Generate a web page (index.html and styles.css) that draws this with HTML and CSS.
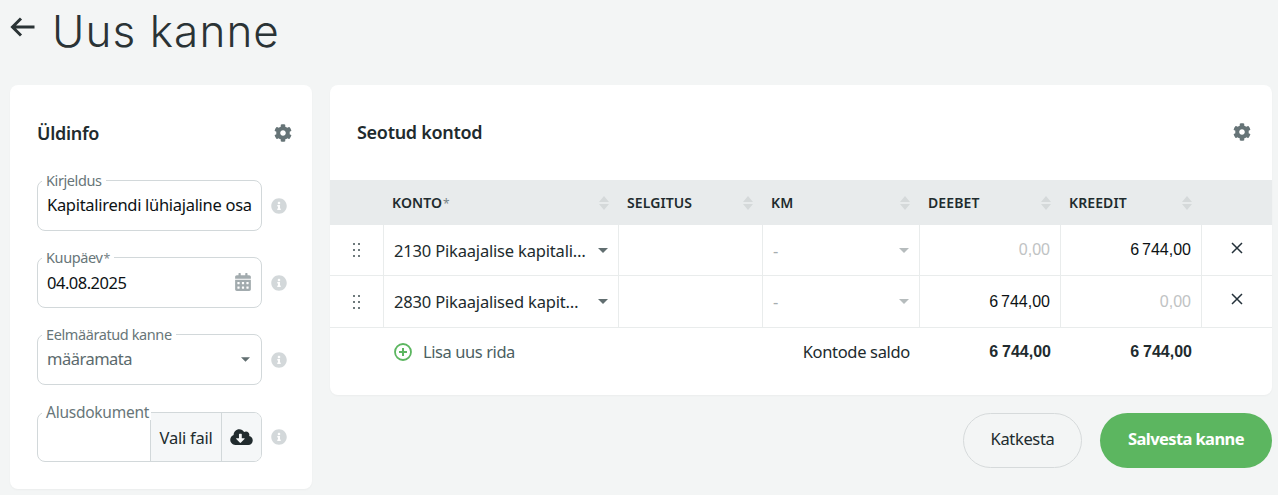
FILE: index.html
```html
<!DOCTYPE html>
<html lang="et">
<head>
<meta charset="utf-8">
<title>Uus kanne</title>
<link rel="stylesheet" href="styles.css">
</head>
<body>
<svg class="defs" width="0" height="0">
  <symbol id="cog" viewBox="0 0 512 512"><path d="M487.4 315.7l-42.6-24.6c4.3-23.2 4.3-47 0-70.2l42.6-24.6c4.9-2.8 7.1-8.6 5.5-14-11.1-35.6-30-67.8-54.7-94.6-3.8-4.1-10-5.1-14.8-2.3L380.8 110c-17.9-15.4-38.5-27.3-60.8-35.1V25.8c0-5.6-3.9-10.5-9.4-11.7-36.7-8.2-74.3-7.8-109.2 0-5.5 1.2-9.4 6.1-9.4 11.7V75c-22.2 7.9-42.8 19.8-60.8 35.1L88.7 85.5c-4.9-2.8-11-1.9-14.8 2.3-24.7 26.7-43.6 58.9-54.7 94.6-1.7 5.4.6 11.2 5.5 14L67.3 221c-4.3 23.2-4.3 47 0 70.2l-42.6 24.6c-4.9 2.8-7.1 8.6-5.5 14 11.1 35.6 30 67.8 54.7 94.6 3.8 4.1 10 5.1 14.8 2.3l42.6-24.6c17.9 15.4 38.5 27.3 60.8 35.1v49.2c0 5.6 3.9 10.5 9.4 11.7 36.7 8.2 74.3 7.8 109.2 0 5.5-1.2 9.4-6.1 9.4-11.7v-49.2c22.2-7.9 42.8-19.8 60.8-35.1l42.6 24.6c4.9 2.8 11 1.9 14.8-2.3 24.7-26.7 43.6-58.9 54.7-94.6 1.5-5.5-.7-11.3-5.6-14.1zM256 336c-44.1 0-80-35.9-80-80s35.9-80 80-80 80 35.9 80 80-35.9 80-80 80z"/></symbol>
  <symbol id="info" viewBox="0 0 512 512"><path d="M256 8C119 8 8 119.100 8 256c0 137 111 248 248 248s248-111 248-248C504 119.100 393 8 256 8zm0 110c23.200 0 42 18.800 42 42s-18.800 42-42 42-42-18.800-42-42 18.800-42 42-42zm56 254c0 6.600-5.400 12-12 12h-88c-6.600 0-12-5.400-12-12v-24c0-6.600 5.400-12 12-12h12v-64h-12c-6.600 0-12-5.400-12-12v-24c0-6.600 5.400-12 12-12h64c6.600 0 12 5.400 12 12v100h12c6.600 0 12 5.400 12 12v24z"/></symbol>
  <symbol id="sort" viewBox="0 0 10 14"><path d="M5 0l5 6H0zM5 14L0 8h10z"/></symbol>
  <symbol id="caret" viewBox="0 0 10 5"><path d="M0 0h10L5 5z"/></symbol>
  <symbol id="drag" viewBox="0 0 7 14"><path d="M0 0h2v2H0zM5 0h2v2H5zM0 6h2v2H0zM5 6h2v2H5zM0 12h2v2H0zM5 12h2v2H5z"/></symbol>
  <symbol id="close" viewBox="0 0 12 12"><path d="M1 1l10 10M11 1L1 11" fill="none" stroke="currentColor" stroke-width="1.500"/></symbol>
</svg>

<header class="page-head">
  <svg class="back" viewBox="0 0 26 20" aria-hidden="true"><path d="M24.500 10H2.500M11 1.500L2.500 10l8.500 8.500" fill="none" stroke="currentColor" stroke-width="3"/></svg>
  <h1 class="title">Uus kanne</h1>
</header>

<main class="layout">
  <section class="card side">
    <div class="side-head">
      <h2 class="card-title">Üldinfo</h2>
      <svg class="cog"><use href="#cog"/></svg>
    </div>

    <div class="form-row">
      <div class="field">
        <span class="legend">Kirjeldus</span>
        <span class="value">Kapitalirendi lühiajaline osa</span>
      </div>
      <svg class="info"><use href="#info"/></svg>
    </div>

    <div class="form-row">
      <div class="field">
        <span class="legend">Kuupäev<i class="req">*</i></span>
        <span class="value date">04.08.2025</span>
        <svg class="calendar" viewBox="0 0 448 512"><path d="M0 464c0 26.500 21.500 48 48 48h352c26.500 0 48-21.500 48-48V192H0v272zm320-196c0-6.600 5.400-12 12-12h40c6.600 0 12 5.400 12 12v40c0 6.600-5.400 12-12 12h-40c-6.600 0-12-5.400-12-12v-40zm0 128c0-6.600 5.400-12 12-12h40c6.600 0 12 5.400 12 12v40c0 6.600-5.400 12-12 12h-40c-6.600 0-12-5.400-12-12v-40zM192 268c0-6.600 5.400-12 12-12h40c6.600 0 12 5.400 12 12v40c0 6.600-5.400 12-12 12h-40c-6.600 0-12-5.400-12-12v-40zm0 128c0-6.600 5.400-12 12-12h40c6.600 0 12 5.400 12 12v40c0 6.600-5.400 12-12 12h-40c-6.600 0-12-5.400-12-12v-40zM64 268c0-6.600 5.400-12 12-12h40c6.600 0 12 5.400 12 12v40c0 6.600-5.400 12-12 12H76c-6.600 0-12-5.400-12-12v-40zm0 128c0-6.600 5.400-12 12-12h40c6.600 0 12 5.400 12 12v40c0 6.600-5.400 12-12 12H76c-6.600 0-12-5.400-12-12v-40zM400 64h-48V16c0-8.800-7.200-16-16-16h-32c-8.800 0-16 7.200-16 16v48H160V16c0-8.800-7.200-16-16-16h-32c-8.800 0-16 7.200-16 16v48H48C21.500 64 0 85.500 0 112v48h448v-48c0-26.500-21.500-48-48-48z"/></svg>
      </div>
      <svg class="info"><use href="#info"/></svg>
    </div>

    <div class="form-row wide-gap">
      <div class="field">
        <span class="legend">Eelmääratud kanne</span>
        <span class="value muted">määramata</span>
        <svg class="caret field-caret"><use href="#caret"/></svg>
      </div>
      <svg class="info"><use href="#info"/></svg>
    </div>

    <div class="form-row last">
      <div class="field file">
        <span class="legend big">Alusdokument</span>
        <span class="file-space"></span>
        <span class="file-btn">Vali fail</span>
        <span class="file-icon"><svg class="cloud" viewBox="0 0 640 512"><path d="M537.600 226.600c4.100-10.700 6.400-22.400 6.400-34.600 0-53-43-96-96-96-19.700 0-38.100 6-53.300 16.200C367 64.200 315.300 32 256 32c-88.400 0-160 71.600-160 160 0 2.700.1 5.400.2 8.100C40.200 219.800 0 273.200 0 336c0 79.500 64.500 144 144 144h368c70.700 0 128-57.300 128-128 0-61.900-44-113.600-102.400-125.400zm-132.900 88.700L299.300 420.700c-6.200 6.200-16.400 6.200-22.600 0L171.300 315.300c-10.100-10.100-2.900-27.300 11.300-27.300H248V176c0-8.800 7.200-16 16-16h48c8.800 0 16 7.200 16 16v112h65.400c14.200 0 21.400 17.200 11.300 27.300z"/></svg></span>
      </div>
      <svg class="info"><use href="#info"/></svg>
    </div>
  </section>

  <div class="content">
    <section class="card accounts">
      <div class="accounts-head">
        <h2 class="card-title">Seotud kontod</h2>
        <svg class="cog"><use href="#cog"/></svg>
      </div>

      <div class="grid head-row">
        <div></div>
        <div class="th"><span>KONTO<i class="req">*</i></span><svg class="sort"><use href="#sort"/></svg></div>
        <div class="th"><span>SELGITUS</span><svg class="sort"><use href="#sort"/></svg></div>
        <div class="th"><span>KM</span><svg class="sort"><use href="#sort"/></svg></div>
        <div class="th"><span>DEEBET</span><svg class="sort"><use href="#sort"/></svg></div>
        <div class="th"><span>KREEDIT</span><svg class="sort"><use href="#sort"/></svg></div>
        <div></div>
      </div>

      <div class="grid body-row first">
        <div class="td center"><svg class="drag"><use href="#drag"/></svg></div>
        <div class="td between lined"><span>2130 Pikaajalise kapitali…</span><svg class="caret"><use href="#caret"/></svg></div>
        <div class="td lined"></div>
        <div class="td between lined dim"><span>-</span><svg class="caret light"><use href="#caret"/></svg></div>
        <div class="td num lined zero">0,00</div>
        <div class="td num lined">6 744,00</div>
        <div class="td center lined"><svg class="close"><use href="#close"/></svg></div>
      </div>

      <div class="grid body-row">
        <div class="td center"><svg class="drag"><use href="#drag"/></svg></div>
        <div class="td between lined"><span>2830 Pikaajalised kapit…</span><svg class="caret"><use href="#caret"/></svg></div>
        <div class="td lined"></div>
        <div class="td between lined dim"><span>-</span><svg class="caret light"><use href="#caret"/></svg></div>
        <div class="td num lined">6 744,00</div>
        <div class="td num lined zero">0,00</div>
        <div class="td center lined"><svg class="close"><use href="#close"/></svg></div>
      </div>

      <div class="grid foot-row">
        <div></div>
        <div class="add">
          <svg class="plus" viewBox="0 0 18 18"><circle cx="9" cy="9" r="8" fill="none" stroke="currentColor" stroke-width="1.800"/><path d="M9 5v8M5 9h8" fill="none" stroke="currentColor" stroke-width="2"/></svg>
          <span>Lisa uus rida</span>
        </div>
        <div></div>
        <div class="saldo">Kontode saldo</div>
        <div class="total">6 744,00</div>
        <div class="total">6 744,00</div>
        <div></div>
      </div>
    </section>

    <div class="actions">
      <button class="btn ghost" type="button">Katkesta</button>
      <button class="btn primary" type="button">Salvesta kanne</button>
    </div>
  </div>
</main>
</body>
</html>
```

FILE: styles.css
```css
* { box-sizing: border-box; }

html, body { height: 100%; }

body {
  margin: 0;
  padding: 0 6px 0 10px;
  overflow: hidden;
  background: #f3f5f5;
  color: #212b2e;
  font-family: "Noto Sans", "Open Sans", sans-serif;
  font-size: 16.500px;
  letter-spacing: -0.25px;
}

.defs { display: block; height: 0; }

.page-head {
  display: flex;
  align-items: flex-start;
  height: 85px;
  gap: 16px;
}

.back { width: 26px; height: 20px; margin-top: 17px; color: #2a3335; flex: none; }

.title {
  margin: 0;
  padding-top: 4px;
  font-family: "Inter", sans-serif;
  font-size: 44px;
  line-height: 54px;
  font-weight: 350;
  letter-spacing: 1.100px;
  color: #2a3335;
}

.layout { display: flex; align-items: flex-start; gap: 18px; }

.card { background: #fff; border-radius: 8px; box-shadow: 0 1px 2px rgba(40, 50, 55, 0.04); }

.side { width: 302px; height: 404px; padding: 28px 20px 27px 27px; flex: none; }

.side-head {
  display: flex;
  align-items: center;
  justify-content: space-between;
  height: 40px;
  margin-bottom: 27px;
}

.card-title { margin: 0; font-size: 18px; line-height: 24px; font-weight: 600; letter-spacing: -0.3px; }

.cog { width: 18px; height: 18px; fill: #667477; }

.form-row { display: flex; align-items: center; gap: 9px; margin-bottom: 26px; }
.form-row.wide-gap { margin-bottom: 27px; }
.form-row.last { margin-bottom: 0; }

.info { width: 16px; height: 16px; fill: #d3d8da; flex: none; }

.field {
  position: relative;
  display: flex;
  align-items: center;
  width: 225px;
  height: 51px;
  padding: 0 9px 2px 9px;
  border: 1px solid #d2d8da;
  border-radius: 8px;
}

.legend {
  position: absolute;
  top: -8px;
  left: 4px;
  padding: 0 4px;
  background: #fff;
  color: #687679;
  font-size: 14.500px;
  line-height: 15px;
  letter-spacing: -0.4px;
  white-space: nowrap;
}

.legend.big { top: -8px; font-size: 15.500px; letter-spacing: -0.25px; padding: 0 2px 0 4px; }

.req { color: #778487; font-style: normal; font-weight: 400; font-size: 0.85em; margin-left: 1px; }

.value { flex: 1; color: #0c1214; white-space: nowrap; letter-spacing: -0.3px; }
.value.date { padding-top: 2px; letter-spacing: -0.5px; }
.value.muted { color: #5b6a6d; letter-spacing: -0.5px; }

.calendar { width: 16px; height: 18px; margin: 1px 1px 0 0; fill: #a2abae; }

.caret { width: 10px; height: 5px; fill: #616e70; flex: none; }
.caret.light { fill: #b6bcbd; }
.field-caret { width: 9px; margin: 2px 2px 0 0; }

.field.file { height: 50px; padding: 0; }

.file-space { flex: 1; }

.file-btn,
.file-icon {
  display: flex;
  align-items: center;
  justify-content: center;
  height: 100%;
  background: #f5f7f8;
  border-left: 1px solid #d2d8da;
}

.file-btn { width: 71px; }
.file-icon { width: 40px; border-radius: 0 7px 7px 0; }
.cloud { width: 23px; height: 18px; fill: #212b2e; }

.content { flex: 1; min-width: 0; }

.accounts { height: 310px; overflow: hidden; }

.accounts-head {
  display: flex;
  align-items: center;
  justify-content: space-between;
  height: 95px;
  padding: 0 21px 2px 27px;
}

.grid { display: grid; grid-template-columns: 53px 235px 144px 157px 141px 141px 71px; }

.head-row { height: 45px; background: #e8ebec; }

.th {
  display: flex;
  align-items: center;
  justify-content: space-between;
  padding: 0 9px;
  font-size: 14px;
  font-weight: 600;
  letter-spacing: 0.1px;
}

.sort { width: 10px; height: 14px; fill: #d5d9da; flex: none; }

.body-row { height: 52px; border-bottom: 1px solid #e9ecec; }
.body-row.first { height: 51px; }

.td { display: flex; align-items: center; padding: 0 10px; min-width: 0; white-space: nowrap; letter-spacing: -0.18px; }

.lined { border-left: 1px solid #e9ecec; }

.center { justify-content: center; }
.between { justify-content: space-between; padding-right: 10px; }

.dim { color: #a6adaf; }

.num {
  justify-content: flex-end;
  padding-right: 10px;
  font-family: "Liberation Sans", sans-serif;
  font-size: 16px;
  word-spacing: -1.500px;
  letter-spacing: 0;
  color: #0c1214;
}

.num.zero { color: #bfc3c4; }

.drag { width: 7px; height: 14px; fill: #6e7a7c; }

.close { width: 12px; height: 12px; color: #24313a; margin-bottom: 5px; }

.foot-row { height: 50px; padding-bottom: 3px; align-items: center; }

.add { display: flex; align-items: center; gap: 11px; padding-left: 11px; color: #4b5f62; letter-spacing: -0.42px; }

.plus { width: 18px; height: 18px; color: #5cb660; }

.saldo { text-align: right; padding-right: 9px; letter-spacing: -0.33px; }

.total {
  text-align: right;
  padding-right: 9px;
  font-family: "Liberation Sans", sans-serif;
  font-size: 16px;
  font-weight: 700;
  word-spacing: -0.500px;
  letter-spacing: 0;
}

.actions { display: flex; justify-content: flex-end; gap: 18px; margin-top: 18px; }

.btn {
  height: 55px;
  padding: 0 0 4px;
  border-radius: 28px;
  font-family: inherit;
  font-size: 16.500px;
  letter-spacing: -0.35px;
}

.ghost { width: 119px; background: transparent; border: 1px solid #d6dadb; color: #212b2e; }

.primary { width: 172px; background: #5cb660; border: 0; color: #fff; font-weight: 700; letter-spacing: -0.6px; }
```
